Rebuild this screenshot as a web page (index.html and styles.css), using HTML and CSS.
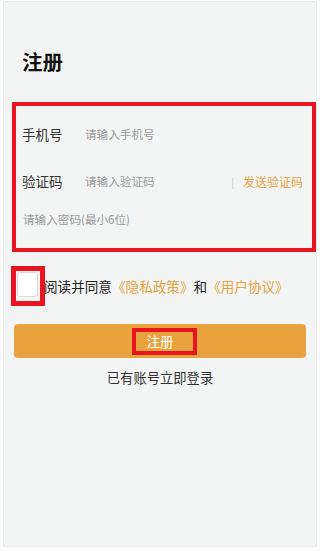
FILE: index.html
```html
<!DOCTYPE html>
<html lang="zh">
<head>
<meta charset="utf-8">
<title>注册</title>
<link rel="stylesheet" href="styles.css">
</head>
<body>
<div class="page">
  <h1 class="title">注册</h1>
  <div class="form">
    <div class="row row-first">
      <span class="label">手机号</span>
      <span class="ph">请输入手机号</span>
    </div>
    <div class="row">
      <span class="label">验证码</span>
      <span class="ph grow">请输入验证码</span>
      <span class="sep">|</span>
      <span class="send">发送验证码</span>
    </div>
    <div class="row row-pwd">
      <span class="ph">请输入密码(最小6位)</span>
    </div>
  </div>
  <div class="agree">
    <span class="check-wrap"><span class="check"></span></span>
    <span class="agree-text">阅读并同意<span class="link">《隐私政策》</span>和<span class="link">《用户协议》</span></span>
  </div>
  <div class="btn"><span class="btn-text">注册</span></div>
  <div class="login">已有账号立即登录</div>
</div>
</body>
</html>
```
FILE: styles.css
```css
html, body {
  margin: 0;
  padding: 0;
  background: #fbfcfb;
}
body {
  font-family: "Noto Sans CJK SC", "Noto Sans", sans-serif;
  color: #333;
}
.page {
  margin: 1px 3px 2px 3px;
  height: 546px;
  box-sizing: border-box;
  background: #f3f5f4;
  border: 1px solid #eaecec;
  overflow: hidden;
}
.title {
  margin: 0;
  padding: 44px 0 0 18px;
  font-size: 20.5px;
  line-height: 30px;
  font-weight: 700;
  color: #111;
}
.form {
  margin: 26px 0 0 8px;
  border: 4px solid #e8141f;
  padding: 0 0 10px 0;
  display: flex;
  flex-direction: column;
}
.row {
  display: flex;
  align-items: center;
  height: 38px;
  padding: 0 9px 0 6px;
}
.row-first {
  height: 56px;
}
.row-pwd {
  padding-left: 7px;
}
.label {
  width: 63px;
  font-size: 13.5px;
  color: #333;
  flex: none;
}
.ph {
  font-size: 11.6px;
  color: #9a9a9a;
}
.grow {
  flex: 1;
}
.sep {
  font-size: 10px;
  color: #c8c8c8;
  margin-right: 9px;
}
.send {
  font-size: 12px;
  color: #e6a23c;
}
.agree {
  display: flex;
  align-items: center;
  margin: 14px 0 0 7px;
}
.check-wrap {
  width: 34px;
  height: 40px;
  box-sizing: border-box;
  border: 5px solid #e8141f;
  padding: 1px 0 0 1px;
  flex: none;
}
.check {
  display: block;
  width: 21px;
  height: 25px;
  box-sizing: border-box;
  background: #fff;
  border: 1px solid #d9d9d9;
  border-radius: 3px;
}
.agree-text {
  font-size: 13.6px;
  color: #222;
  margin-left: -1px;
}
.link {
  color: #e6a23c;
}
.btn {
  margin: 18px 0 0 10px;
  width: 292px;
  height: 34px;
  background: #e8a33e;
  border-radius: 4px;
  display: flex;
  align-items: center;
  justify-content: center;
}
.btn-text {
  display: inline-block;
  border: 4px solid #e8141f;
  padding: 0 19px 0 11px;
  margin-left: 8px;
  line-height: 19px;
  font-size: 13.5px;
  color: #fff;
}
.login {
  margin-top: 10px;
  text-align: center;
  font-size: 13.3px;
  line-height: 20px;
  color: #333;
}
```
